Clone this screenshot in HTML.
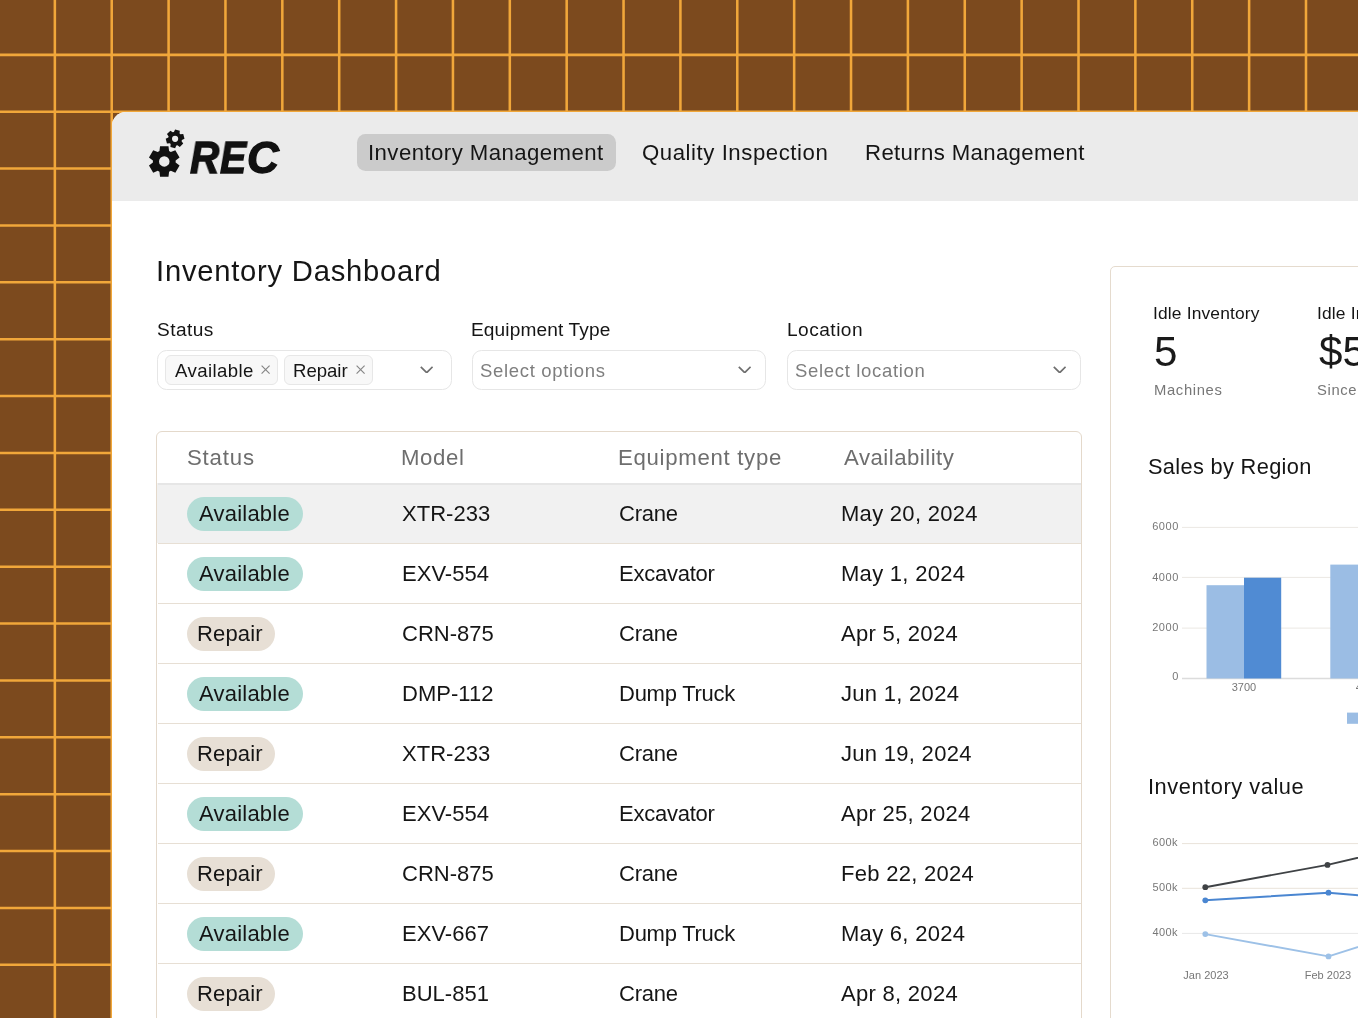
<!DOCTYPE html><html><head><meta charset='utf-8'><title>REC Inventory Dashboard</title><style>
*{margin:0;padding:0;box-sizing:border-box}
html,body{width:1358px;height:1018px;overflow:hidden}
body{position:relative;font-family:"Liberation Sans",sans-serif;background-color:#7c4a1e;}
.t{position:absolute;white-space:pre;display:block;will-change:transform}
.card{position:absolute;left:112px;top:112px;width:1400px;height:1000px;background:#fff;border-top-left-radius:14px;overflow:hidden}
.nav{position:absolute;left:0;top:0;width:1400px;height:88.5px;background:#ebebeb}
.abs{position:absolute}
</style></head><body>
<svg class='abs' style='left:0;top:0' width='1358' height='1018' viewBox='0 0 1358 1018'><line x1='54.85' y1='0' x2='54.85' y2='1018' stroke='#f1a73a' stroke-width='2.55'/><line x1='111.72' y1='0' x2='111.72' y2='1018' stroke='#f1a73a' stroke-width='2.55'/><line x1='168.59' y1='0' x2='168.59' y2='1018' stroke='#f1a73a' stroke-width='2.55'/><line x1='225.46' y1='0' x2='225.46' y2='1018' stroke='#f1a73a' stroke-width='2.55'/><line x1='282.33' y1='0' x2='282.33' y2='1018' stroke='#f1a73a' stroke-width='2.55'/><line x1='339.20' y1='0' x2='339.20' y2='1018' stroke='#f1a73a' stroke-width='2.55'/><line x1='396.07' y1='0' x2='396.07' y2='1018' stroke='#f1a73a' stroke-width='2.55'/><line x1='452.94' y1='0' x2='452.94' y2='1018' stroke='#f1a73a' stroke-width='2.55'/><line x1='509.81' y1='0' x2='509.81' y2='1018' stroke='#f1a73a' stroke-width='2.55'/><line x1='566.68' y1='0' x2='566.68' y2='1018' stroke='#f1a73a' stroke-width='2.55'/><line x1='623.55' y1='0' x2='623.55' y2='1018' stroke='#f1a73a' stroke-width='2.55'/><line x1='680.42' y1='0' x2='680.42' y2='1018' stroke='#f1a73a' stroke-width='2.55'/><line x1='737.29' y1='0' x2='737.29' y2='1018' stroke='#f1a73a' stroke-width='2.55'/><line x1='794.16' y1='0' x2='794.16' y2='1018' stroke='#f1a73a' stroke-width='2.55'/><line x1='851.03' y1='0' x2='851.03' y2='1018' stroke='#f1a73a' stroke-width='2.55'/><line x1='907.90' y1='0' x2='907.90' y2='1018' stroke='#f1a73a' stroke-width='2.55'/><line x1='964.77' y1='0' x2='964.77' y2='1018' stroke='#f1a73a' stroke-width='2.55'/><line x1='1021.64' y1='0' x2='1021.64' y2='1018' stroke='#f1a73a' stroke-width='2.55'/><line x1='1078.51' y1='0' x2='1078.51' y2='1018' stroke='#f1a73a' stroke-width='2.55'/><line x1='1135.38' y1='0' x2='1135.38' y2='1018' stroke='#f1a73a' stroke-width='2.55'/><line x1='1192.25' y1='0' x2='1192.25' y2='1018' stroke='#f1a73a' stroke-width='2.55'/><line x1='1249.12' y1='0' x2='1249.12' y2='1018' stroke='#f1a73a' stroke-width='2.55'/><line x1='1305.99' y1='0' x2='1305.99' y2='1018' stroke='#f1a73a' stroke-width='2.55'/><line x1='1362.86' y1='0' x2='1362.86' y2='1018' stroke='#f1a73a' stroke-width='2.55'/><line x1='0' y1='54.85' x2='1358' y2='54.85' stroke='#f1a73a' stroke-width='2.55'/><line x1='0' y1='111.72' x2='1358' y2='111.72' stroke='#f1a73a' stroke-width='2.55'/><line x1='0' y1='168.59' x2='1358' y2='168.59' stroke='#f1a73a' stroke-width='2.55'/><line x1='0' y1='225.46' x2='1358' y2='225.46' stroke='#f1a73a' stroke-width='2.55'/><line x1='0' y1='282.33' x2='1358' y2='282.33' stroke='#f1a73a' stroke-width='2.55'/><line x1='0' y1='339.20' x2='1358' y2='339.20' stroke='#f1a73a' stroke-width='2.55'/><line x1='0' y1='396.07' x2='1358' y2='396.07' stroke='#f1a73a' stroke-width='2.55'/><line x1='0' y1='452.94' x2='1358' y2='452.94' stroke='#f1a73a' stroke-width='2.55'/><line x1='0' y1='509.81' x2='1358' y2='509.81' stroke='#f1a73a' stroke-width='2.55'/><line x1='0' y1='566.68' x2='1358' y2='566.68' stroke='#f1a73a' stroke-width='2.55'/><line x1='0' y1='623.55' x2='1358' y2='623.55' stroke='#f1a73a' stroke-width='2.55'/><line x1='0' y1='680.42' x2='1358' y2='680.42' stroke='#f1a73a' stroke-width='2.55'/><line x1='0' y1='737.29' x2='1358' y2='737.29' stroke='#f1a73a' stroke-width='2.55'/><line x1='0' y1='794.16' x2='1358' y2='794.16' stroke='#f1a73a' stroke-width='2.55'/><line x1='0' y1='851.03' x2='1358' y2='851.03' stroke='#f1a73a' stroke-width='2.55'/><line x1='0' y1='907.90' x2='1358' y2='907.90' stroke='#f1a73a' stroke-width='2.55'/><line x1='0' y1='964.77' x2='1358' y2='964.77' stroke='#f1a73a' stroke-width='2.55'/><line x1='0' y1='1021.64' x2='1358' y2='1021.64' stroke='#f1a73a' stroke-width='2.55'/></svg>
<div class='card'><div class='nav'></div></div>
<div class='abs' style='left:357.3px;top:134.4px;width:258.7px;height:36.9px;border-radius:8.5px;background:#cbcbcb'></div>
<svg class='abs' style='left:0;top:0' width='1358' height='1018' viewBox='0 0 1358 1018'><path fill='#111' fill-rule='evenodd' d='M159.45,151.12 L160.05,146.22 L168.49,146.22 L169.09,151.12 L170.81,152.11 L175.34,150.18 L179.57,157.49 L175.63,160.46 L175.63,162.44 L179.57,165.41 L175.34,172.72 L170.81,170.79 L169.09,171.78 L168.49,176.68 L160.05,176.68 L159.45,171.78 L157.73,170.79 L153.20,172.72 L148.97,165.41 L152.91,162.44 L152.91,160.46 L148.97,157.49 L153.20,150.18 L157.73,152.11 Z M159.02,161.40 a5.25,5.25 0 1,0 10.50,0 a5.25,5.25 0 1,0 -10.50,0 Z'/><path fill='#111' fill-rule='evenodd' d='M173.90,132.00 L175.10,129.40 L179.80,130.66 L179.54,133.51 L180.39,134.36 L183.24,134.10 L184.50,138.80 L181.90,140.00 L181.58,141.16 L183.24,143.50 L179.80,146.94 L177.46,145.28 L176.30,145.60 L175.10,148.20 L170.40,146.94 L170.66,144.09 L169.81,143.24 L166.96,143.50 L165.70,138.80 L168.30,137.60 L168.62,136.44 L166.96,134.10 L170.40,130.66 L172.74,132.32 Z M172.00,138.80 a3.10,3.10 0 1,0 6.20,0 a3.10,3.10 0 1,0 -6.20,0 Z'/></svg>
<span class='t' style='left:189.90px;top:135.9px;font-size:44px;line-height:44px;font-weight:700;font-style:italic;color:#111;-webkit-text-stroke:1.4px #111;transform:scaleX(0.92);transform-origin:0 0'>R</span>
<span class='t' style='left:219.60px;top:135.9px;font-size:44px;line-height:44px;font-weight:700;font-style:italic;color:#111;-webkit-text-stroke:1.4px #111;transform:scaleX(0.89);transform-origin:0 0'>E</span>
<span class='t' style='left:246.60px;top:135.9px;font-size:44px;line-height:44px;font-weight:700;font-style:italic;color:#111;-webkit-text-stroke:1.4px #111;transform:scaleX(0.99);transform-origin:0 0'>C</span>
<span class='t' style='left:368.40px;top:142.00px;font-size:22.20px;line-height:22.20px;letter-spacing:0.434px;color:#151515;font-weight:400;font-style:normal;'>Inventory Management</span>
<span class='t' style='left:642.20px;top:142.00px;font-size:22.20px;line-height:22.20px;letter-spacing:0.553px;color:#151515;font-weight:400;font-style:normal;'>Quality Inspection</span>
<span class='t' style='left:865.10px;top:142.00px;font-size:22.20px;line-height:22.20px;letter-spacing:0.353px;color:#151515;font-weight:400;font-style:normal;'>Returns Management</span>
<span class='t' style='left:155.60px;top:257.00px;font-size:29.20px;line-height:29.20px;letter-spacing:0.767px;color:#151515;font-weight:400;font-style:normal;'>Inventory Dashboard</span>
<span class='t' style='left:156.50px;top:319.70px;font-size:19.10px;line-height:19.10px;letter-spacing:0.420px;color:#151515;font-weight:400;font-style:normal;'>Status</span>
<span class='t' style='left:471.00px;top:319.70px;font-size:19.10px;line-height:19.10px;letter-spacing:0.131px;color:#151515;font-weight:400;font-style:normal;'>Equipment Type</span>
<span class='t' style='left:787.00px;top:319.70px;font-size:19.10px;line-height:19.10px;letter-spacing:0.486px;color:#151515;font-weight:400;font-style:normal;'>Location</span>
<div class='abs' style='left:157.0px;top:349.6px;width:294.5px;height:40.3px;border:1.5px solid #e6e6e6;border-radius:9.5px;background:#fff'></div>
<div class='abs' style='left:471.5px;top:349.6px;width:294.2px;height:40.3px;border:1.5px solid #e6e6e6;border-radius:9.5px;background:#fff'></div>
<div class='abs' style='left:786.6px;top:349.6px;width:294.4px;height:40.3px;border:1.5px solid #e6e6e6;border-radius:9.5px;background:#fff'></div>
<div class='abs' style='left:165.4px;top:354.9px;width:112.2px;height:29.9px;border:1.3px solid #e7e7e7;border-radius:6px;background:#f8f8f8'></div>
<div class='abs' style='left:284.2px;top:354.9px;width:88.4px;height:29.9px;border:1.3px solid #e7e7e7;border-radius:6px;background:#f8f8f8'></div>
<span class='t' style='left:174.90px;top:361.90px;font-size:18.60px;line-height:18.60px;letter-spacing:0.412px;color:#151515;font-weight:400;font-style:normal;'>Available</span>
<span class='t' style='left:292.70px;top:361.90px;font-size:18.60px;line-height:18.60px;letter-spacing:-0.020px;color:#151515;font-weight:400;font-style:normal;'>Repair</span>
<svg class='abs' style='left:261px;top:365.2px' width='9.199999999999989' height='9.199999999999989' viewBox='0 0 9.199999999999989 9.199999999999989'><path d='M0.6,0.6 L8.599999999999989,8.599999999999989 M8.599999999999989,0.6 L0.6,8.599999999999989' stroke='#858585' stroke-width='1.15' fill='none'/></svg>
<svg class='abs' style='left:355.8px;top:365.2px' width='9.199999999999989' height='9.199999999999989' viewBox='0 0 9.199999999999989 9.199999999999989'><path d='M0.6,0.6 L8.599999999999989,8.599999999999989 M8.599999999999989,0.6 L0.6,8.599999999999989' stroke='#858585' stroke-width='1.15' fill='none'/></svg>
<svg class='abs' style='left:419.6px;top:365.8px' width='13.4' height='7.5' viewBox='0 0 13.40 7.50'><path d='M0.8,0.8 L6.70,6.70 L12.60,0.8' stroke='#6f6f6f' stroke-width='1.7' fill='none' stroke-linecap='butt' stroke-linejoin='miter'/></svg>
<svg class='abs' style='left:738px;top:365.8px' width='13.4' height='7.5' viewBox='0 0 13.40 7.50'><path d='M0.8,0.8 L6.70,6.70 L12.60,0.8' stroke='#6f6f6f' stroke-width='1.7' fill='none' stroke-linecap='butt' stroke-linejoin='miter'/></svg>
<svg class='abs' style='left:1053px;top:365.8px' width='13.4' height='7.5' viewBox='0 0 13.40 7.50'><path d='M0.8,0.8 L6.70,6.70 L12.60,0.8' stroke='#6f6f6f' stroke-width='1.7' fill='none' stroke-linecap='butt' stroke-linejoin='miter'/></svg>
<span class='t' style='left:479.70px;top:361.90px;font-size:18.50px;line-height:18.50px;letter-spacing:0.677px;color:#7e7e7e;font-weight:400;font-style:normal;'>Select options</span>
<span class='t' style='left:795.00px;top:361.90px;font-size:18.50px;line-height:18.50px;letter-spacing:0.679px;color:#7e7e7e;font-weight:400;font-style:normal;'>Select location</span>
<div class='abs' style='left:156.3px;top:431px;width:925.3px;height:700px;border:1.7px solid #e4d9cb;border-radius:6px;overflow:hidden'><div class='abs' style='left:0;top:51px;width:924px;height:60px;background:#f1f1f1'></div></div>
<div class='abs' style='left:157.5px;top:482.70px;width:923.5px;height:2.0px;background:#e6e6e6'></div>
<div class='abs' style='left:157.5px;top:542.90px;width:923.5px;height:1.6px;background:#e7dfd4'></div>
<div class='abs' style='left:157.5px;top:602.90px;width:923.5px;height:1.6px;background:#e7dfd4'></div>
<div class='abs' style='left:157.5px;top:662.90px;width:923.5px;height:1.6px;background:#e7dfd4'></div>
<div class='abs' style='left:157.5px;top:722.90px;width:923.5px;height:1.6px;background:#e7dfd4'></div>
<div class='abs' style='left:157.5px;top:782.90px;width:923.5px;height:1.6px;background:#e7dfd4'></div>
<div class='abs' style='left:157.5px;top:842.90px;width:923.5px;height:1.6px;background:#e7dfd4'></div>
<div class='abs' style='left:157.5px;top:902.90px;width:923.5px;height:1.6px;background:#e7dfd4'></div>
<div class='abs' style='left:157.5px;top:962.90px;width:923.5px;height:1.6px;background:#e7dfd4'></div>
<div class='abs' style='left:157.5px;top:1022.90px;width:923.5px;height:1.6px;background:#e7dfd4'></div>
<span class='t' style='left:186.50px;top:446.80px;font-size:22.20px;line-height:22.20px;letter-spacing:0.820px;color:#6e6e6e;font-weight:400;font-style:normal;'>Status</span>
<span class='t' style='left:401.40px;top:446.80px;font-size:22.20px;line-height:22.20px;letter-spacing:0.625px;color:#6e6e6e;font-weight:400;font-style:normal;'>Model</span>
<span class='t' style='left:618.30px;top:446.80px;font-size:22.20px;line-height:22.20px;letter-spacing:0.700px;color:#6e6e6e;font-weight:400;font-style:normal;'>Equipment type</span>
<span class='t' style='left:844.10px;top:446.80px;font-size:22.20px;line-height:22.20px;letter-spacing:0.491px;color:#6e6e6e;font-weight:400;font-style:normal;'>Availability</span>
<div class='abs' style='left:187.1px;top:497.40px;width:115.9px;height:33.5px;border-radius:17px;background:#b4ddd6'></div>
<span class='t' style='left:199.30px;top:502.80px;font-size:22.00px;line-height:22.00px;letter-spacing:0.225px;color:#151515;font-weight:400;font-style:normal;'>Available</span>
<span class='t' style='left:401.70px;top:502.80px;font-size:22.00px;line-height:22.00px;letter-spacing:0.017px;color:#151515;font-weight:400;font-style:normal;'>XTR-233</span>
<span class='t' style='left:619.30px;top:502.80px;font-size:22.00px;line-height:22.00px;letter-spacing:-0.250px;color:#151515;font-weight:400;font-style:normal;'>Crane</span>
<span class='t' style='left:841.00px;top:502.80px;font-size:22.00px;line-height:22.00px;letter-spacing:0.291px;color:#151515;font-weight:400;font-style:normal;'>May 20, 2024</span>
<div class='abs' style='left:187.1px;top:557.40px;width:115.9px;height:33.5px;border-radius:17px;background:#b4ddd6'></div>
<span class='t' style='left:199.30px;top:562.80px;font-size:22.00px;line-height:22.00px;letter-spacing:0.225px;color:#151515;font-weight:400;font-style:normal;'>Available</span>
<span class='t' style='left:401.70px;top:562.80px;font-size:22.00px;line-height:22.00px;letter-spacing:0.017px;color:#151515;font-weight:400;font-style:normal;'>EXV-554</span>
<span class='t' style='left:619.30px;top:562.80px;font-size:22.00px;line-height:22.00px;letter-spacing:-0.250px;color:#151515;font-weight:400;font-style:normal;'>Excavator</span>
<span class='t' style='left:841.00px;top:562.80px;font-size:22.00px;line-height:22.00px;letter-spacing:0.291px;color:#151515;font-weight:400;font-style:normal;'>May 1, 2024</span>
<div class='abs' style='left:187.1px;top:617.40px;width:88.1px;height:33.5px;border-radius:17px;background:#e7dfd5'></div>
<span class='t' style='left:197.30px;top:622.80px;font-size:22.00px;line-height:22.00px;letter-spacing:0.140px;color:#151515;font-weight:400;font-style:normal;'>Repair</span>
<span class='t' style='left:401.70px;top:622.80px;font-size:22.00px;line-height:22.00px;letter-spacing:0.017px;color:#151515;font-weight:400;font-style:normal;'>CRN-875</span>
<span class='t' style='left:619.30px;top:622.80px;font-size:22.00px;line-height:22.00px;letter-spacing:-0.250px;color:#151515;font-weight:400;font-style:normal;'>Crane</span>
<span class='t' style='left:841.00px;top:622.80px;font-size:22.00px;line-height:22.00px;letter-spacing:0.291px;color:#151515;font-weight:400;font-style:normal;'>Apr 5, 2024</span>
<div class='abs' style='left:187.1px;top:677.40px;width:115.9px;height:33.5px;border-radius:17px;background:#b4ddd6'></div>
<span class='t' style='left:199.30px;top:682.80px;font-size:22.00px;line-height:22.00px;letter-spacing:0.225px;color:#151515;font-weight:400;font-style:normal;'>Available</span>
<span class='t' style='left:401.70px;top:682.80px;font-size:22.00px;line-height:22.00px;letter-spacing:0.017px;color:#151515;font-weight:400;font-style:normal;'>DMP-112</span>
<span class='t' style='left:619.30px;top:682.80px;font-size:22.00px;line-height:22.00px;letter-spacing:-0.250px;color:#151515;font-weight:400;font-style:normal;'>Dump Truck</span>
<span class='t' style='left:841.00px;top:682.80px;font-size:22.00px;line-height:22.00px;letter-spacing:0.291px;color:#151515;font-weight:400;font-style:normal;'>Jun 1, 2024</span>
<div class='abs' style='left:187.1px;top:737.40px;width:88.1px;height:33.5px;border-radius:17px;background:#e7dfd5'></div>
<span class='t' style='left:197.30px;top:742.80px;font-size:22.00px;line-height:22.00px;letter-spacing:0.140px;color:#151515;font-weight:400;font-style:normal;'>Repair</span>
<span class='t' style='left:401.70px;top:742.80px;font-size:22.00px;line-height:22.00px;letter-spacing:0.017px;color:#151515;font-weight:400;font-style:normal;'>XTR-233</span>
<span class='t' style='left:619.30px;top:742.80px;font-size:22.00px;line-height:22.00px;letter-spacing:-0.250px;color:#151515;font-weight:400;font-style:normal;'>Crane</span>
<span class='t' style='left:841.00px;top:742.80px;font-size:22.00px;line-height:22.00px;letter-spacing:0.291px;color:#151515;font-weight:400;font-style:normal;'>Jun 19, 2024</span>
<div class='abs' style='left:187.1px;top:797.40px;width:115.9px;height:33.5px;border-radius:17px;background:#b4ddd6'></div>
<span class='t' style='left:199.30px;top:802.80px;font-size:22.00px;line-height:22.00px;letter-spacing:0.225px;color:#151515;font-weight:400;font-style:normal;'>Available</span>
<span class='t' style='left:401.70px;top:802.80px;font-size:22.00px;line-height:22.00px;letter-spacing:0.017px;color:#151515;font-weight:400;font-style:normal;'>EXV-554</span>
<span class='t' style='left:619.30px;top:802.80px;font-size:22.00px;line-height:22.00px;letter-spacing:-0.250px;color:#151515;font-weight:400;font-style:normal;'>Excavator</span>
<span class='t' style='left:841.00px;top:802.80px;font-size:22.00px;line-height:22.00px;letter-spacing:0.291px;color:#151515;font-weight:400;font-style:normal;'>Apr 25, 2024</span>
<div class='abs' style='left:187.1px;top:857.40px;width:88.1px;height:33.5px;border-radius:17px;background:#e7dfd5'></div>
<span class='t' style='left:197.30px;top:862.80px;font-size:22.00px;line-height:22.00px;letter-spacing:0.140px;color:#151515;font-weight:400;font-style:normal;'>Repair</span>
<span class='t' style='left:401.70px;top:862.80px;font-size:22.00px;line-height:22.00px;letter-spacing:0.017px;color:#151515;font-weight:400;font-style:normal;'>CRN-875</span>
<span class='t' style='left:619.30px;top:862.80px;font-size:22.00px;line-height:22.00px;letter-spacing:-0.250px;color:#151515;font-weight:400;font-style:normal;'>Crane</span>
<span class='t' style='left:841.00px;top:862.80px;font-size:22.00px;line-height:22.00px;letter-spacing:0.291px;color:#151515;font-weight:400;font-style:normal;'>Feb 22, 2024</span>
<div class='abs' style='left:187.1px;top:917.40px;width:115.9px;height:33.5px;border-radius:17px;background:#b4ddd6'></div>
<span class='t' style='left:199.30px;top:922.80px;font-size:22.00px;line-height:22.00px;letter-spacing:0.225px;color:#151515;font-weight:400;font-style:normal;'>Available</span>
<span class='t' style='left:401.70px;top:922.80px;font-size:22.00px;line-height:22.00px;letter-spacing:0.017px;color:#151515;font-weight:400;font-style:normal;'>EXV-667</span>
<span class='t' style='left:619.30px;top:922.80px;font-size:22.00px;line-height:22.00px;letter-spacing:-0.250px;color:#151515;font-weight:400;font-style:normal;'>Dump Truck</span>
<span class='t' style='left:841.00px;top:922.80px;font-size:22.00px;line-height:22.00px;letter-spacing:0.291px;color:#151515;font-weight:400;font-style:normal;'>May 6, 2024</span>
<div class='abs' style='left:187.1px;top:977.40px;width:88.1px;height:33.5px;border-radius:17px;background:#e7dfd5'></div>
<span class='t' style='left:197.30px;top:982.80px;font-size:22.00px;line-height:22.00px;letter-spacing:0.140px;color:#151515;font-weight:400;font-style:normal;'>Repair</span>
<span class='t' style='left:401.70px;top:982.80px;font-size:22.00px;line-height:22.00px;letter-spacing:0.017px;color:#151515;font-weight:400;font-style:normal;'>BUL-851</span>
<span class='t' style='left:619.30px;top:982.80px;font-size:22.00px;line-height:22.00px;letter-spacing:-0.250px;color:#151515;font-weight:400;font-style:normal;'>Crane</span>
<span class='t' style='left:841.00px;top:982.80px;font-size:22.00px;line-height:22.00px;letter-spacing:0.291px;color:#151515;font-weight:400;font-style:normal;'>Apr 8, 2024</span>
<div class='abs' style='left:1109.6px;top:265.5px;width:400px;height:900px;border:1.8px solid #e5dbce;border-radius:5px;background:#fff'></div>
<span class='t' style='left:1152.70px;top:304.90px;font-size:17.40px;line-height:17.40px;letter-spacing:0.154px;color:#151515;font-weight:400;font-style:normal;'>Idle Inventory</span>
<span class='t' style='left:1153.70px;top:330.73px;font-size:42.20px;line-height:42.20px;letter-spacing:0.000px;color:#1a1a1a;font-weight:400;font-style:normal;'>5</span>
<span class='t' style='left:1153.70px;top:383.40px;font-size:14.80px;line-height:14.80px;letter-spacing:0.643px;color:#777;font-weight:400;font-style:normal;'>Machines</span>
<span class='t' style='left:1316.80px;top:304.90px;font-size:17.40px;line-height:17.40px;letter-spacing:0.154px;color:#151515;font-weight:400;font-style:normal;'>Idle Inventory Value</span>
<span class='t' style='left:1319.00px;top:330.73px;font-size:42.20px;line-height:42.20px;letter-spacing:0.000px;color:#1a1a1a;font-weight:400;font-style:normal;'>$540K</span>
<span class='t' style='left:1317.10px;top:383.40px;font-size:14.80px;line-height:14.80px;letter-spacing:0.643px;color:#777;font-weight:400;font-style:normal;'>Since Jan 2024</span>
<span class='t' style='left:1148.10px;top:456.00px;font-size:21.80px;line-height:21.80px;letter-spacing:0.329px;color:#151515;font-weight:400;font-style:normal;'>Sales by Region</span>
<span class='t' style='left:1148.20px;top:775.90px;font-size:21.80px;line-height:21.80px;letter-spacing:0.557px;color:#151515;font-weight:400;font-style:normal;'>Inventory value</span>
<svg class='abs' style='left:0;top:0' width='1358' height='1018' viewBox='0 0 1358 1018'><line x1='1182' y1='527.4' x2='1400' y2='527.4' stroke='#ebe8e3' stroke-width='1'/><line x1='1182' y1='577.4' x2='1400' y2='577.4' stroke='#ebe8e3' stroke-width='1'/><line x1='1182' y1='628.1' x2='1400' y2='628.1' stroke='#ebe8e3' stroke-width='1'/><line x1='1182' y1='678.5' x2='1400' y2='678.5' stroke='#dcdcdc' stroke-width='1.5'/><rect x='1206.5' y='585.2' width='37.5' height='93.3' fill='#9bbde4'/><rect x='1244' y='577.7' width='37.2' height='100.8' fill='#508bd3'/><rect x='1330.3' y='564.6' width='37.5' height='113.9' fill='#9bbde4'/><rect x='1347' y='712.6' width='15' height='11.2' fill='#9bbde4'/><line x1='1182' y1='843.6' x2='1400' y2='843.6' stroke='#e9e3da' stroke-width='1'/><line x1='1182' y1='888.3' x2='1400' y2='888.3' stroke='#e9e3da' stroke-width='1'/><line x1='1182' y1='933.4' x2='1400' y2='933.4' stroke='#e8e8e8' stroke-width='1'/><polyline points='1205.3,887.2 1327.5,864.9 1451,836.1' fill='none' stroke='#3f4245' stroke-width='1.9' stroke-linejoin='round'/><circle cx='1205.3' cy='887.2' r='2.9' fill='#3f4245'/><circle cx='1327.5' cy='864.9' r='2.9' fill='#3f4245'/><polyline points='1205.3,900.3 1328.5,892.7 1451,903' fill='none' stroke='#4a86d1' stroke-width='1.9' stroke-linejoin='round'/><circle cx='1205.3' cy='900.3' r='2.9' fill='#4a86d1'/><circle cx='1328.5' cy='892.7' r='2.9' fill='#4a86d1'/><polyline points='1205.3,934.1 1328.5,956.4 1451,917.3' fill='none' stroke='#9dc1e7' stroke-width='1.9' stroke-linejoin='round'/><circle cx='1205.3' cy='934.1' r='2.9' fill='#9dc1e7'/><circle cx='1328.5' cy='956.4' r='2.9' fill='#9dc1e7'/></svg>
<span class='t' style='left:978.60px;width:200px;text-align:right;top:520.70px;font-size:11px;line-height:11px;letter-spacing:0.6px;color:#777'>6000</span>
<span class='t' style='left:978.60px;width:200px;text-align:right;top:571.50px;font-size:11px;line-height:11px;letter-spacing:0.6px;color:#777'>4000</span>
<span class='t' style='left:978.60px;width:200px;text-align:right;top:621.90px;font-size:11px;line-height:11px;letter-spacing:0.6px;color:#777'>2000</span>
<span class='t' style='left:978.60px;width:200px;text-align:right;top:670.50px;font-size:11px;line-height:11px;letter-spacing:0.6px;color:#777'>0</span>
<span class='t' style='left:978.00px;width:200px;text-align:right;top:836.80px;font-size:11px;line-height:11px;letter-spacing:0.4px;color:#777'>600k</span>
<span class='t' style='left:978.00px;width:200px;text-align:right;top:881.90px;font-size:11px;line-height:11px;letter-spacing:0.4px;color:#777'>500k</span>
<span class='t' style='left:978.00px;width:200px;text-align:right;top:926.80px;font-size:11px;line-height:11px;letter-spacing:0.4px;color:#777'>400k</span>
<span class='t' style='left:1144.00px;width:200px;text-align:center;top:682.00px;font-size:11px;line-height:11px;color:#777'>3700</span>
<span class='t' style='left:1268.00px;width:200px;text-align:center;top:682.00px;font-size:11px;line-height:11px;color:#777'>4500</span>
<span class='t' style='left:1105.50px;width:200px;text-align:center;top:969.90px;font-size:11px;line-height:11px;color:#777'>Jan 2023</span>
<span class='t' style='left:1228.20px;width:200px;text-align:center;top:969.90px;font-size:11px;line-height:11px;color:#777'>Feb 2023</span>
</body></html>
